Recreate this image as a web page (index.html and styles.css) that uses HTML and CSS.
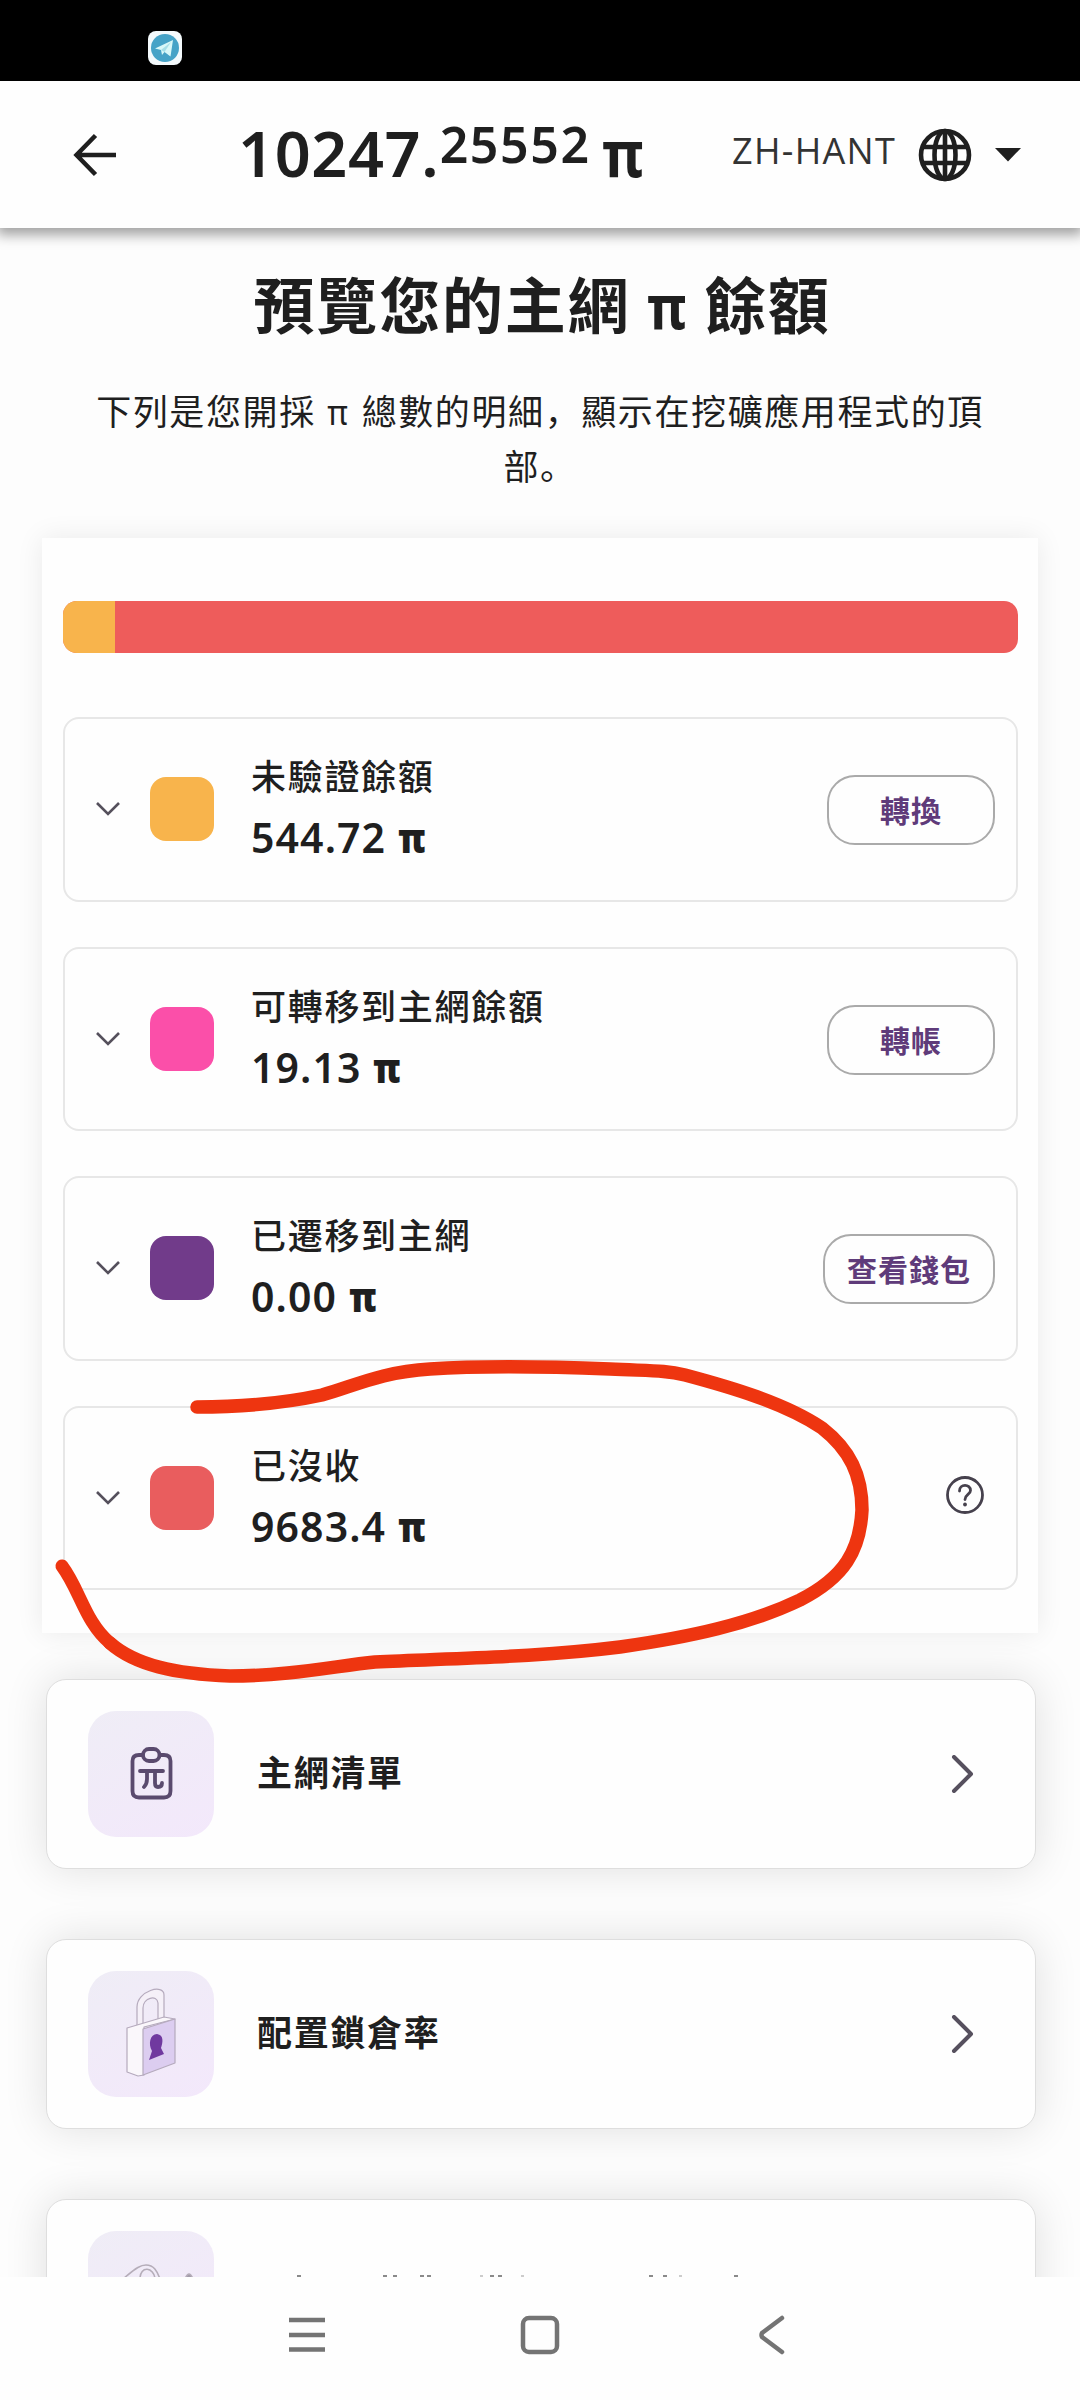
FILE: index.html
```html
<!DOCTYPE html>
<html lang="zh-Hans">
<head>
<meta charset="utf-8">
<title>π</title>
<link rel="stylesheet" href="styles.css">
</head>
<body>
<div class="screen">
  <div class="status-bar">
    <svg class="telegram" width="36" height="36" viewBox="0 0 36 36"><rect x="1" y="1" width="34" height="34" rx="8" fill="#f4fafc"/><circle cx="18" cy="18" r="14" fill="#46a3c7"/><path d="M8 18.500 26 10 23.500 26.500 17.500 22 15 25 14 20Z" fill="#d9f8f8"/><path d="M14 20 24 12 17.500 22Z" fill="#a7dfe7"/></svg>
  </div>
  <header class="top-bar">
    <svg class="back" width="44" height="44" viewBox="0 0 44 44" fill="none" stroke="#1f1f1f" stroke-width="4.500"><path d="M43 22H4M22.500 2.500 3.500 22 22.500 41.500"/></svg>
    <div class="total"><span class="whole">10247.</span><span class="decimals">25552</span><span class="unit">π</span></div>
    <div class="language">
      <span class="code">ZH-HANT</span>
      <svg class="globe" width="54" height="54" viewBox="0 0 54 54" fill="none" stroke="#1f1f1f" stroke-width="4.600"><circle cx="27" cy="27" r="24"/><ellipse cx="27" cy="27" rx="10.500" ry="24"/><path d="M4 19H50M4 35H50M27 3V51"/></svg>
      <svg width="26" height="14" viewBox="0 0 26 14"><path d="M0 0H26L13 13.500Z" fill="#1f1f1f"/></svg>
    </div>
  </header>
  <main class="content">
    <h1 class="title">預覽您的主網 <span class="title-pi">π</span> 餘額</h1>
    <p class="intro">下列是您開採 <span class="intro-pi">π</span> 總數的明細，顯示在挖礦應用程式的頂部。</p>
    <section class="balances">
      <div class="bar"><div class="bar-part orange" style="width:5.4%"></div></div>
      <div class="row">
        <svg class="chevron" width="26" height="16" viewBox="0 0 26 16"><path d="M2 2 13 13 24 2"/></svg>
        <i class="swatch orange"></i>
        <div class="info"><span class="label">未驗證餘額</span><span class="amount">544.72 <b>π</b></span></div>
        <button class="action">轉換</button>
      </div>
      <div class="row">
        <svg class="chevron" width="26" height="16" viewBox="0 0 26 16"><path d="M2 2 13 13 24 2"/></svg>
        <i class="swatch pink"></i>
        <div class="info"><span class="label">可轉移到主網餘額</span><span class="amount">19.13 <b>π</b></span></div>
        <button class="action">轉帳</button>
      </div>
      <div class="row">
        <svg class="chevron" width="26" height="16" viewBox="0 0 26 16"><path d="M2 2 13 13 24 2"/></svg>
        <i class="swatch purple"></i>
        <div class="info"><span class="label">已遷移到主網</span><span class="amount">0.00 <b>π</b></span></div>
        <button class="action wide">查看錢包</button>
      </div>
      <div class="row">
        <svg class="chevron" width="26" height="16" viewBox="0 0 26 16"><path d="M2 2 13 13 24 2"/></svg>
        <i class="swatch red"></i>
        <div class="info"><span class="label" lang="zh-Hant">已沒收</span><span class="amount">9683.4 <b>π</b></span></div>
        <svg class="help" width="42" height="42" viewBox="0 0 42 42" fill="none" stroke="#46414d" stroke-width="2.800"><circle cx="21" cy="21" r="17.500"/><path d="M15.500 17C15.500 9.500 26.500 9.800 26.500 16.500 26.500 20.500 21 20.500 21 25.500" stroke-linecap="round"/><circle cx="21" cy="30.500" r="1.900" fill="#46414d" stroke="none"/></svg>
      </div>
    </section>
    <nav class="links">
      <a class="link">
        <span class="tile"><svg width="126" height="126" viewBox="0 0 126 126" fill="none" stroke="#5a4a6e" stroke-width="3.800" stroke-linecap="round" stroke-linejoin="round"><path d="M54 44H51Q44.500 44 44.500 50V80Q44.500 86.500 51 86.500H76Q82.500 86.500 82.500 80V50Q82.500 44 76 44H73"/><rect x="55" y="38" width="16.500" height="12" rx="6"/><path d="M52 60H75M59 60V68Q59 73 56 76M67 60V72Q67 76 70 76Q74 76 74 72"/></svg></span>
        <span class="link-text">主網清單</span>
        <svg class="go" width="24" height="38" viewBox="0 0 24 38"><path d="M3 2 20 19 3 36"/></svg>
      </a>
      <a class="link">
        <span class="tile"><svg width="126" height="126" viewBox="0 0 126 126" stroke="#b5aabd" stroke-width="1.200" stroke-linejoin="round"><path d="M49 58V36C49 20 76 12 76 24V50L70 52V32C69 23 55 27 55 37V58Z" fill="#f5f0f8"/><path d="M39 57 76 46 87 48 56 56V104L50 105 39 101Z" fill="#faf7fb"/><path d="M55 58 87 48V92L55 104Z" fill="#dccdf0"/><path d="M61 89 64 80C60 73 62 63 69 63 76 64 75 71 73 77L76 83Z" fill="#70399f" stroke="none"/></svg></span>
        <span class="link-text">配置鎖倉率</span>
        <svg class="go" width="24" height="38" viewBox="0 0 24 38"><path d="M3 2 20 19 3 36"/></svg>
      </a>
      <a class="link">
        <span class="tile"><svg width="126" height="126" viewBox="0 0 126 126" fill="none" stroke="#b5adb9" stroke-width="1.600"><path d="M35 48C49 36 53 34 58 34 66 34 69 40 72 48M52 48C52 34 66 36 67 48"/><path d="M97 48Q101 38 105 48" fill="#a49cab"/></svg></span>
        <svg class="peek" width="460" height="4" viewBox="0 0 460 4" fill="#8a8a8a"><path d="M40 0h4v2h-4zM126 0h4v2h-4zM136 0h4v2h-4zM163 0h4v2h-4zM170 0h4v2h-4zM233 0h4v2h-4zM241 0h4v2h-4zM392 0h4v2h-4zM406 0h4v2h-4zM477 0h4v2h-4z"/><path d="M264 0h3v2h-3zM223 0h3v2h-3zM422 0h3v2h-3z" fill="#ccc"/></svg>
      </a>
    </nav>
  </main>
  <footer class="system-nav">
    <svg width="40" height="40" viewBox="0 0 40 40" fill="none" stroke="#747474" stroke-width="4.500"><path d="M1 5H37M1 20H37M1 34.500H37"/></svg>
    <svg width="40" height="40" viewBox="0 0 40 40" fill="none" stroke="#747474" stroke-width="4.500"><rect x="3" y="3" width="34" height="34" rx="6"/></svg>
    <svg width="40" height="40" viewBox="0 0 40 40" fill="none" stroke="#747474" stroke-width="4.500" stroke-linecap="round" stroke-linejoin="round"><path d="M30 3 10 18Q9 20 10 22L30 37" /></svg>
  </footer>
  <svg class="scribble" width="1080" height="2400" viewBox="0 0 1080 2400" fill="none" stroke="#ee3510" stroke-linecap="round" stroke-linejoin="round"><path stroke-width="13.500" d="M197 1407C240 1407 285 1403 322 1395 352 1387 380 1372 430 1369 490 1365 560 1367 610 1369 650 1371 665 1370 685 1375 730 1387 785 1403 822 1428 850 1450 862 1475 862 1510 860 1550 845 1577 800 1600 750 1624 690 1637 620 1647 540 1657 460 1658 375 1662 335 1666 290 1676 230 1676 175 1674 135 1665 110 1643"/><path stroke-width="13" d="M110 1643C85 1622 80 1590 62 1566"/></svg>
</div>
</body>
</html>
```
FILE: styles.css
```css
* { box-sizing: border-box; }
body { margin: 0; background: #fdfdfd; color: #1f1f1f; font-family: "Noto Sans", "Noto Sans CJK SC", sans-serif; }
.screen { position: relative; width: 1080px; height: 2400px; overflow: hidden; display: flex; flex-direction: column; }
.status-bar { flex: none; height: 81px; background: #000; padding: 30px 0 0 147px; }
.telegram { display: block; }
.top-bar { flex: none; position: relative; z-index: 1; height: 147px; background: #fefefe; box-shadow: 0 4px 12px 3px rgba(0,0,0,.36); display: flex; align-items: center; padding: 0 59px 0 73px; }
.total { display: flex; align-items: baseline; margin-left: 121px; width: 412px; white-space: nowrap; font-weight: 600; line-height: 80px; }
.whole { font-size: 63px; letter-spacing: .6px; width: 203px; }
.decimals { font-size: 50px; letter-spacing: 1.600px; width: 155px; transform: translateY(-14px); }
.unit { font-size: 65px; font-weight: 700; margin-left: 8px; transform: scaleX(.86); transform-origin: left; }
.language { display: flex; align-items: center; flex: 1; margin-left: 82px; }
.code { font-family: "Open Sans", sans-serif; font-weight: 400; color: #333; font-size: 36px; letter-spacing: 1.300px; line-height: 40px; width: 172px; margin-right: 14px; white-space: nowrap; position: relative; top: -4px; }
.globe { margin-right: 23px; }
.content { height: 2049px; overflow: hidden; padding: 0 42px; }
.title { margin: 40px 0 0; padding-left: 4px; font-size: 61px; line-height: 76px; letter-spacing: 1.800px; font-weight: 700; text-align: center; white-space: nowrap; }
.title-pi { display: inline-block; transform: scaleX(.87); margin: 0 -4px; }
.intro { margin: 40px 0 0; height: 154px; font-size: 35px; line-height: 55px; letter-spacing: 1.600px; text-align: center; padding: 0 50px; }
.intro-pi { display: inline-block; transform: scaleX(.9); }
.balances { height: 1095px; padding: 63px 20px 0 21px; background: #fefefe; box-shadow: 0 0 26px rgba(0,0,0,.08); }
.bar { height: 52px; border-radius: 14px; overflow: hidden; background: #ee5c5b; margin-bottom: 64px; }
.bar-part { height: 100%; }
.row { height: 184.500px; margin-bottom: 45px; border: 2px solid #e7e7e7; border-radius: 16px; display: flex; align-items: center; padding: 0 21px 0 30px; }
.chevron { fill: none; stroke: #55505c; stroke-width: 2.600px; margin-right: 29px; }
.swatch { width: 64px; height: 64px; border-radius: 16px; margin-right: 37px; }
.orange { background: #f8b44c; }
.pink { background: #fb4fa9; }
.purple { background: #713b8a; }
.red { background: #e95d5e; }
.info { display: flex; flex-direction: column; flex: 1; white-space: nowrap; }
.label { font-size: 35px; letter-spacing: 1.700px; line-height: 52px; font-weight: 500; margin-top: -1px; }
.amount { font-size: 41px; letter-spacing: 1.100px; line-height: 58px; font-weight: 600; margin-top: 5px; }
.amount b { display: inline-block; transform: scaleX(.84); transform-origin: left; }
.action { min-width: 168px; height: 70px; border: 2px solid #aaa; border-radius: 28px; background: #fefefe; color: #5f3b7a; padding: 0 20px 2px; margin-top: 2px; font: 700 30px/40px "Noto Sans CJK SC", sans-serif; letter-spacing: 1px; }
.action.wide { min-width: 172px; }
.help { margin: -5px 9px 0 0; }
.links { display: flex; flex-direction: column; gap: 70px; padding: 46px 2px 0 4px; }
.link { flex: none; height: 190px; background: #fefefe; border: 1px solid #dedede; border-radius: 20px; box-shadow: 0 0 44px rgba(0,0,0,.12); display: flex; align-items: center; padding: 0 60px 0 41px; }
.tile { width: 126px; height: 126px; flex: none; border-radius: 28px; background: linear-gradient(150deg, #efedf6, #f3e8fb); margin-right: 43px; }
.tile svg { display: block; }
.link-text { flex: 1; font-size: 35px; letter-spacing: 1.700px; font-weight: 700; line-height: 52px; margin-top: -2px; }
.go { fill: none; stroke: #56505e; stroke-width: 4px; stroke-linecap: round; stroke-linejoin: round; }
.peek { align-self: flex-start; margin-top: 75px; overflow: visible; }
.system-nav { position: relative; flex: none; height: 123px; background: #fefefe; display: grid; grid-template-columns: 40px 40px 40px; column-gap: 192px; padding: 38px 0 0 288px; }
.scribble { position: absolute; left: 0; top: 0; }
```
